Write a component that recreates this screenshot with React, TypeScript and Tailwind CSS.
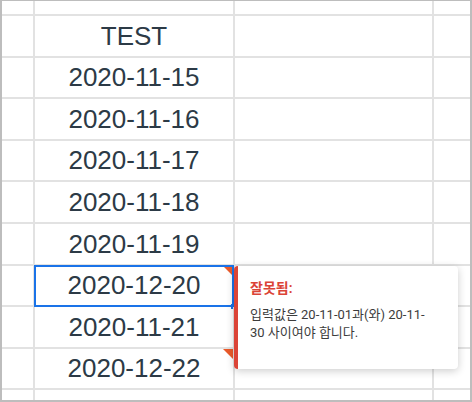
const rows: { text: string; h: string; flagged?: boolean; selected?: boolean }[] = [
  { text: '', h: 'h-[15px]' },
  { text: 'TEST', h: 'h-[42px]' },
  { text: '2020-11-15', h: 'h-[41px]' },
  { text: '2020-11-16', h: 'h-[42px]' },
  { text: '2020-11-17', h: 'h-[41px]' },
  { text: '2020-11-18', h: 'h-[42px]' },
  { text: '2020-11-19', h: 'h-[42px]' },
  { text: '2020-12-20', h: 'h-[41px]', flagged: true, selected: true },
  { text: '2020-11-21', h: 'h-[42px]' },
  { text: '2020-12-22', h: 'h-[41px]', flagged: true },
]

function Flag() {
  return (
    <svg className="absolute right-0 top-0" width="10" height="10" viewBox="0 0 10 10">
      <polygon points="0,0 10,0 10,10" fill="#ea5a2a" />
    </svg>
  )
}

export default function App() {
  return (
    <div className="relative h-[402px] w-[472px] overflow-hidden border-b-2 border-l-2 border-r-2 border-t border-[#bdbdbd] bg-white font-['Liberation_Sans',Arial,sans-serif]">
      <div className="grid grid-cols-[33px_200px_199px_1fr]">
        {rows.map((r, i) => (
          <div key={i} className="contents">
            <div className={`${r.h} border-b-2 border-r-2 border-[#e2e2e2]`} />
            <div
              className={`${r.h} relative flex items-center justify-center border-b-2 border-r-2 border-[#e2e2e2] text-[26px] text-[#2c3a46]`}
            >
              {r.text}
              {r.flagged && <Flag />}
              {r.selected && (
                <div className="absolute -left-px -right-px -top-px bottom-[-2px] border-2 border-[#1a73e8]">
                  <div className="absolute -bottom-[4px] -right-[4px] h-[5px] w-[5px] bg-[#1a73e8]" />
                </div>
              )}
            </div>
            <div className={`${r.h} border-b-2 border-r-2 border-[#e2e2e2]`} />
            <div className={`${r.h} border-b-2 border-[#e2e2e2]`} />
          </div>
        ))}
        <div className="h-[10px] border-r-2 border-[#e2e2e2]" />
        <div className="h-[10px] border-r-2 border-[#e2e2e2]" />
        <div className="h-[10px] border-r-2 border-[#e2e2e2]" />
        <div className="h-[10px]" />
      </div>

      <div className="absolute left-[232px] top-[265px] h-[103px] w-[224px] rounded-[4px] border-l-4 border-[#db4437] bg-white pl-[12px] pr-[20px] pt-[12px] font-['Roboto','Noto_Sans_CJK_KR',sans-serif] shadow-[0_2px_8px_rgba(0,0,0,0.2)]">
        <div className="text-[14px] font-semibold leading-[20px] text-[#db4437]">잘못됨:</div>
        <div className="mt-[8px] text-[13px] leading-[18px] text-[#3c3c3c]">
          입력값은 20-11-01과(와) 20-11-30 사이여야 합니다.
        </div>
      </div>
    </div>
  )
}
